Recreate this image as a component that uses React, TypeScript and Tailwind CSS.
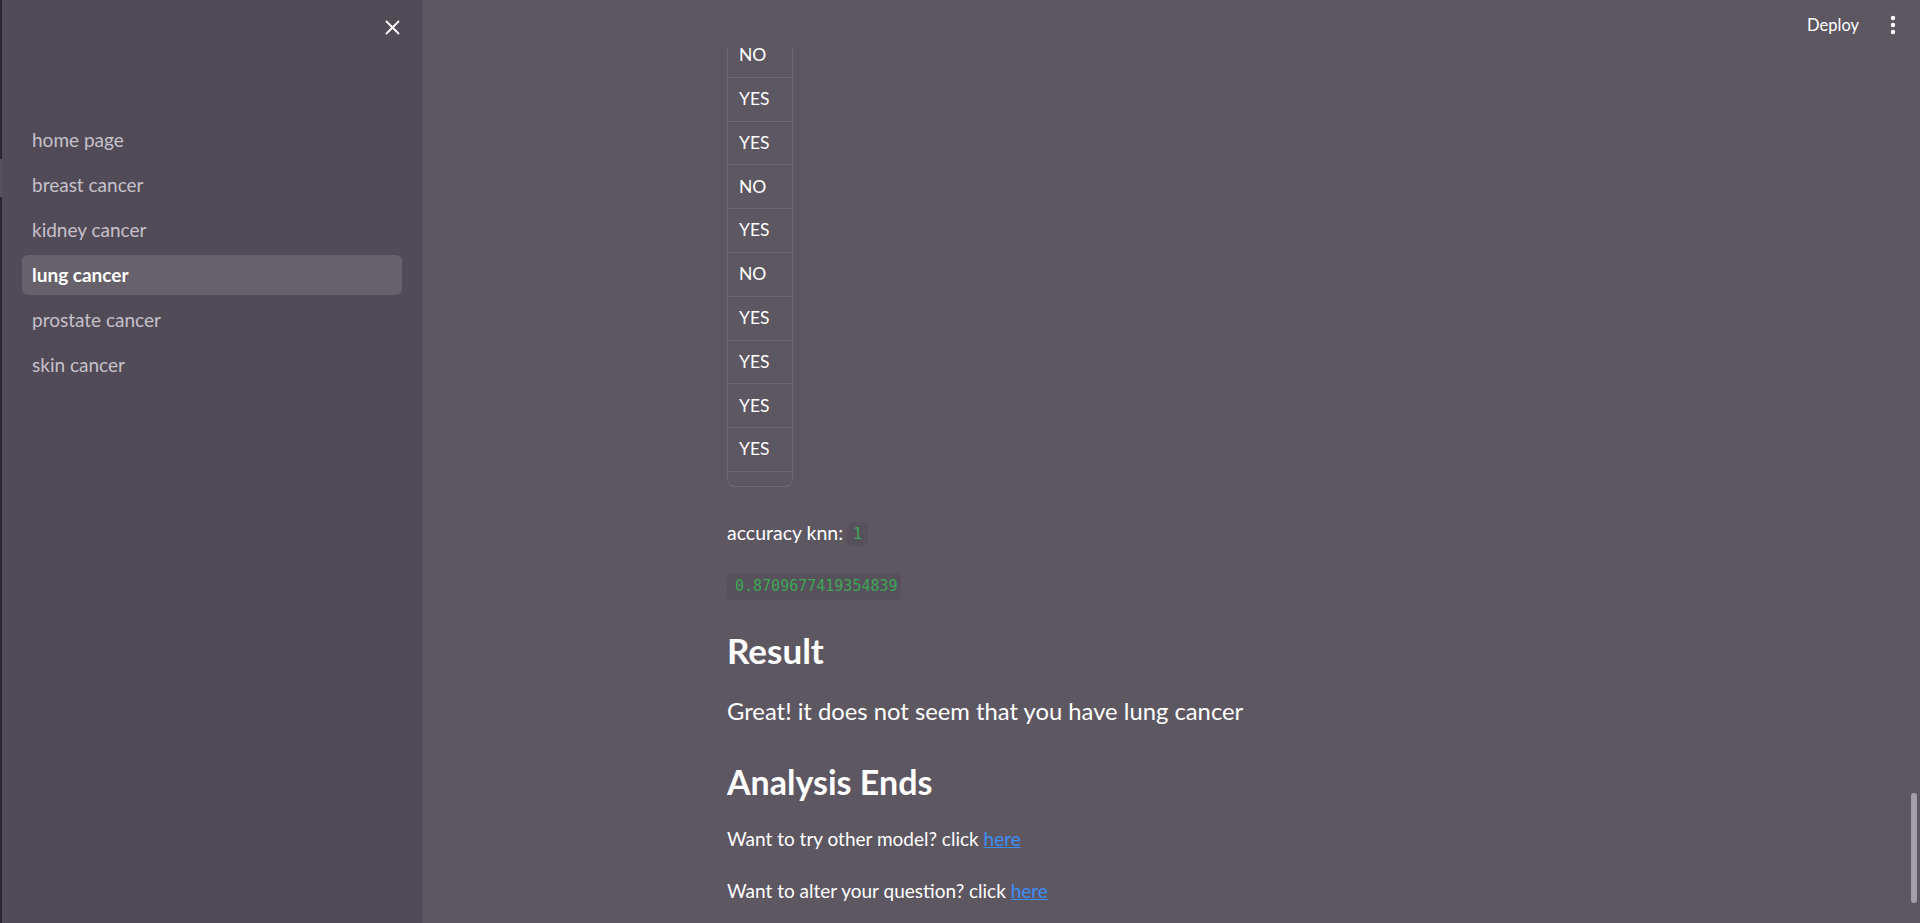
import React from "react";

const rows = ["NO", "YES", "YES", "NO", "YES", "NO", "YES", "YES", "YES", "YES"];
const nav = ["home page", "breast cancer", "kidney cancer", "lung cancer", "prostate cancer", "skin cancer"];

export default function App() {
  return (
    <div className="flex h-[923px] w-[1920px] overflow-hidden bg-[#5d5762] font-['Lato',sans-serif] text-white">
      {/* left dark edge */}
      <div className="flex w-[2px] shrink-0 flex-col bg-[#2b2630]">
        <div className="h-[159px]" />
        <div className="h-[38px] bg-[#57515c]" />
      </div>
      {/* sidebar */}
      <aside className="flex w-[420px] shrink-0 flex-col bg-[#514b57]">
        <div className="flex h-[55px] items-center justify-end pr-[22px]">
          <svg width="15" height="15" viewBox="0 0 15 15" className="text-white">
            <path d="M1.5 1.5 L13.5 13.5 M13.5 1.5 L1.5 13.5" stroke="currentColor" strokeWidth="1.8" strokeLinecap="round" />
          </svg>
        </div>
        <nav className="mt-[65px] flex flex-col gap-[5px] px-[20px]">
          {nav.map((n) => (
            <div
              key={n}
              className={
                n === "lung cancer"
                  ? "flex h-[40px] items-center rounded-[6px] bg-[#67616c] px-[10px] text-[19px] font-bold text-white"
                  : "flex h-[40px] items-center px-[10px] text-[19px] text-[#c6c1cb]"
              }
            >
              {n}
            </div>
          ))}
        </nav>
      </aside>
      {/* main */}
      <main className="relative flex flex-1 flex-col">
        <header className="absolute left-0 right-0 top-0 z-10 flex h-[48px] items-center justify-end bg-[#5d5762] pr-[24px]">
          <span className="mr-[31px] mt-[2px] text-[16.5px] text-white">Deploy</span>
          <svg width="6" height="22" viewBox="0 0 6 22" className="mt-[2px]">
            <circle cx="3" cy="4" r="2.2" fill="#ffffff" />
            <circle cx="3" cy="11" r="2.2" fill="#ffffff" />
            <circle cx="3" cy="18" r="2.2" fill="#ffffff" />
          </svg>
        </header>
        <div className="flex flex-1 flex-row">
          <div className="flex flex-1 flex-col pl-[305px] pt-[34px]">
            {/* table */}
            <div className="w-[66px] overflow-hidden rounded-b-[8px] border-x border-b border-[#6e6873]">
              {rows.map((r, i) => (
                <div key={i} className="flex h-[43.8px] items-center border-b border-[#6e6873] pl-[11px] text-[17.5px] text-white">
                  {r}
                </div>
              ))}
              <div className="h-[14px]" />
            </div>
            <div className="mt-[30px] flex h-[32px] items-center text-[19.5px] text-white">
              <span>accuracy knn:</span>
              <span className="ml-[4px] mt-[3px] flex h-[24px] items-center rounded-[5px] bg-[#57515c] px-[6px] font-['DejaVu_Sans_Mono',monospace] text-[15px] text-[#3ea655]">
                1
              </span>
            </div>
            <div className="mt-[24px] flex h-[27px] w-[174px] items-center rounded-[5px] bg-[#57515c] px-[8px] font-['DejaVu_Sans_Mono',monospace] text-[15px] text-[#3ea655]">
              0.8709677419354839
            </div>
            <h3 className="mt-[27px] flex h-[48px] items-center text-[35px] font-bold leading-none">Result</h3>
            <p className="mt-[17px] flex h-[40px] items-center text-[23.8px]">Great! it does not seem that you have lung cancer</p>
            <h3 className="mt-[26px] flex h-[48px] items-center text-[34px] font-bold leading-none">Analysis Ends</h3>
            <p className="mt-[17px] flex h-[32px] items-center text-[19px]">
              Want to try other model? click&nbsp;<a className="text-[#3e8ef7] underline" href="#">here</a>
            </p>
            <p className="mt-[20px] flex h-[32px] items-center text-[19px]">
              Want to alter your question? click&nbsp;<a className="text-[#3e8ef7] underline" href="#">here</a>
            </p>
          </div>
          {/* scrollbar */}
          <div className="flex w-[9px] shrink-0 flex-col pr-[2px]">
            <div className="h-[793px]" />
            <div className="h-[110px] w-[6px] rounded-[3px] bg-[#a49fa8]" />
          </div>
        </div>
      </main>
    </div>
  );
}
